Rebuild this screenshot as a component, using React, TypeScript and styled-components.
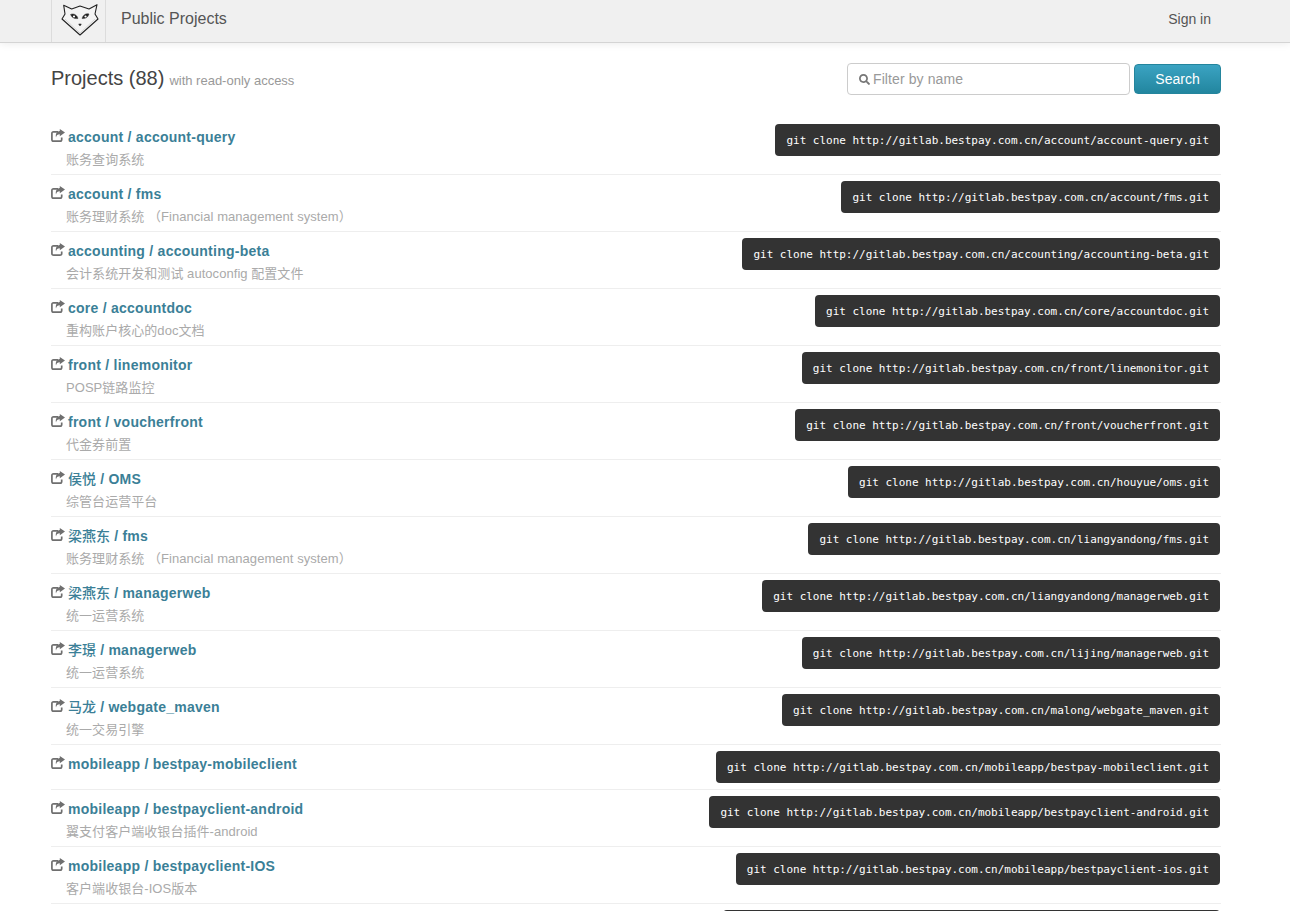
import React from 'react';
import styled, { createGlobalStyle } from 'styled-components';
import { FaSearch } from 'react-icons/fa';

const GlobalStyle = createGlobalStyle`
  html, body {
    margin: 0;
    padding: 0;
    height: 911px;
    overflow: hidden;
    background: #fff;
    font-family: "Liberation Sans", "Noto Sans CJK SC", Arial, sans-serif;
    font-size: 13px;
    color: #555;
  }
`;

const NavBar = styled.header`
  height: 42px;
  background: #f0f0f0;
  border-bottom: 1px solid #d4d4d4;
  box-shadow: 0 1px 8px rgba(0, 0, 0, 0.08);
  padding-left: 51px;
`;

const NavInner = styled.div`
  width: 1170px;
  height: 100%;
  display: flex;
  align-items: center;
`;

const Brand = styled.a`
  width: 53px;
  height: 100%;
  display: flex;
  align-items: center;
  justify-content: center;
  border-left: 1px solid #dcdcdc;
  border-right: 1px solid #dcdcdc;

  svg {
    margin: -2px 0 0 2px;
  }
`;

const NavTitle = styled.span`
  margin-left: 15px;
  padding-bottom: 4px;
  font-size: 16px;
  color: #555;
  flex: 1;
`;

const SignIn = styled.a`
  padding-bottom: 4px;
  font-size: 14px;
  color: #555;
  margin-right: 10px;
`;

const Main = styled.main`
  width: 1170px;
  margin-left: 51px;
`;

const TopRow = styled.div`
  box-sizing: border-box;
  height: 75px;
  display: flex;
  align-items: center;
  padding-bottom: 3px;
`;

const Heading = styled.h3`
  margin: 0;
  flex: 1;
  font-size: 20px;
  font-weight: 400;
  line-height: 24px;
  color: #444;
`;

const HeadingNote = styled.small`
  font-size: 13px;
  color: #999;
  margin-left: 5px;
`;

const FilterBox = styled.label`
  box-sizing: border-box;
  width: 283px;
  height: 32px;
  display: flex;
  align-items: center;
  gap: 3px;
  padding-left: 11px;
  background: #fff;
  border: 1px solid #ccc;
  border-radius: 4px;
  color: #777;
  font-size: 11px;
`;

const FilterInput = styled.input`
  flex: 1;
  min-width: 0;
  border: 0;
  outline: 0;
  padding: 0;
  background: transparent;
  font-family: inherit;
  font-size: 14px;
  letter-spacing: 0.1px;
  color: #555;

  &::placeholder {
    color: #999;
    opacity: 1;
  }
`;

const SearchButton = styled.button`
  box-sizing: border-box;
  width: 87px;
  height: 30px;
  margin-left: 4px;
  background: linear-gradient(to bottom, #3ba3c2, #22869f);
  border: 1px solid #24859d;
  border-radius: 4px;
  color: #fff;
  font-family: inherit;
  font-size: 14px;
  padding: 0;
`;

const ProjectList = styled.ul`
  list-style: none;
  margin: 0;
  padding: 0;
`;

const ProjectRow = styled.li`
  display: flex;
  justify-content: space-between;
  align-items: flex-start;
  padding: 6px 0;
  border-bottom: 1px solid #eee;
`;

const ProjectInfo = styled.div`
  min-width: 0;
`;

const ProjectTitle = styled.div`
  display: flex;
  align-items: center;
  height: 26px;
  font-size: 14px;
  font-weight: 700;
  letter-spacing: 0.25px;
  color: #3b7f97;
`;

const ProjectName = styled.span`
  line-height: 20px;
  white-space: pre;
`;

const OwnerName = styled.span<{ $cjk?: boolean }>`
  font-weight: ${(p) => (p.$cjk ? 500 : 700)};
  letter-spacing: ${(p) => (p.$cjk ? '0' : '0.25px')};
  line-height: 0;
`;

const ShareGlyph = styled.svg`
  width: 14px;
  height: 13px;
  margin-right: 3px;
  margin-top: -4px;
  color: #6f6f6f;
`;

const ProjectDesc = styled.div`
  padding-left: 15px;
  height: 18px;
  line-height: 19px;
  font-size: 13px;
  letter-spacing: 0.05px;
  color: #aaa;
`;

const CloneBar = styled.code`
  box-sizing: border-box;
  height: 32px;
  margin-right: 1px;
  padding: 0 11px;
  display: flex;
  align-items: center;
  background: #333;
  border-radius: 4px;
  color: #fff;
  font-family: "DejaVu Sans Mono", monospace;
  font-size: 11px;
  letter-spacing: -0.02px;
  white-space: pre;
`;

const ShareIcon = () => (
  <ShareGlyph viewBox="0 0 14 13">
    <path
      d="M7 2.8 H2.6 Q0.9 2.8 0.9 4.5 V10.4 Q0.9 12.1 2.6 12.1 H9 Q10.7 12.1 10.7 10.4 V8.5"
      fill="none"
      stroke="currentColor"
      strokeWidth="1.7"
    />
    <path d="M8.8 0 L14 3.6 L8.8 7.2 V5.2 C6.5 5.2 5.5 6.2 5 8.4 C4.2 5 5.8 2.3 8.8 2 Z" fill="currentColor" />
  </ShareGlyph>
);

const CatLogo = () => (
  <svg width="38" height="36" viewBox="0 0 38 36" fill="none" stroke="#222" strokeLinejoin="round">
    <path
      d="M2.7 3.3 L10.7 7 L19 4 L28 7 L36 2.7 L34 12 L37 17 L19 33 L1 17 L4 12 Z"
      strokeWidth="1.1"
      fill="#f4f4f4"
    />
    <path d="M4 17 L19 31 L34 17" strokeWidth="0.4" stroke="#aaa" />
    <path d="M9.5 12.5 C12 11 16 12.5 17 16.5 C14 17 11 16 9.5 12.5 Z" fill="#222" strokeWidth="0.4" />
    <path d="M28 12 C25.5 11 22 12.5 21 16.5 C24 17 27 15.5 28 12 Z" fill="#222" strokeWidth="0.4" />
    <circle cx="13" cy="14.5" r="1.1" fill="#fff" stroke="none" />
    <circle cx="24.5" cy="14.5" r="1.1" fill="#fff" stroke="none" />
    <path d="M17.7 22 H20.3 L19 24 Z" fill="#222" strokeWidth="0.5" />
  </svg>
);

type Project = { owner: string; cjk?: boolean; name: string; desc?: string; path: string };

const projects: Project[] = [
  { owner: 'account', name: 'account-query', desc: '账务查询系统', path: 'account/account-query' },
  { owner: 'account', name: 'fms', desc: '账务理财系统 （Financial management system）', path: 'account/fms' },
  { owner: 'accounting', name: 'accounting-beta', desc: '会计系统开发和测试 autoconfig 配置文件', path: 'accounting/accounting-beta' },
  { owner: 'core', name: 'accountdoc', desc: '重构账户核心的doc文档', path: 'core/accountdoc' },
  { owner: 'front', name: 'linemonitor', desc: 'POSP链路监控', path: 'front/linemonitor' },
  { owner: 'front', name: 'voucherfront', desc: '代金券前置', path: 'front/voucherfront' },
  { owner: '侯悦', cjk: true, name: 'OMS', desc: '综管台运营平台', path: 'houyue/oms' },
  { owner: '梁燕东', cjk: true, name: 'fms', desc: '账务理财系统 （Financial management system）', path: 'liangyandong/fms' },
  { owner: '梁燕东', cjk: true, name: 'managerweb', desc: '统一运营系统', path: 'liangyandong/managerweb' },
  { owner: '李璟', cjk: true, name: 'managerweb', desc: '统一运营系统', path: 'lijing/managerweb' },
  { owner: '马龙', cjk: true, name: 'webgate_maven', desc: '统一交易引擎', path: 'malong/webgate_maven' },
  { owner: 'mobileapp', name: 'bestpay-mobileclient', path: 'mobileapp/bestpay-mobileclient' },
  { owner: 'mobileapp', name: 'bestpayclient-android', desc: '翼支付客户端收银台插件-android', path: 'mobileapp/bestpayclient-android' },
  { owner: 'mobileapp', name: 'bestpayclient-IOS', desc: '客户端收银台-IOS版本', path: 'mobileapp/bestpayclient-ios' },
  { owner: 'mobileapp', name: 'bestpayclient-wxpay', path: 'mobileapp/bestpayclient-wxpay' },
];

const App = () => (
  <>
    <GlobalStyle />
    <NavBar>
      <NavInner>
        <Brand>
          <CatLogo />
        </Brand>
        <NavTitle>Public Projects</NavTitle>
        <SignIn>Sign in</SignIn>
      </NavInner>
    </NavBar>
    <Main>
      <TopRow>
        <Heading>
          Projects (88)
          <HeadingNote>with read-only access</HeadingNote>
        </Heading>
        <FilterBox>
          <FaSearch />
          <FilterInput placeholder="Filter by name" />
        </FilterBox>
        <SearchButton>Search</SearchButton>
      </TopRow>
      <ProjectList>
        {projects.map((p) => (
          <ProjectRow key={p.path}>
            <ProjectInfo>
              <ProjectTitle>
                <ShareIcon />
                <ProjectName>
                  <OwnerName $cjk={p.cjk}>{p.owner}</OwnerName>
                  {` / ${p.name}`}
                </ProjectName>
              </ProjectTitle>
              {p.desc && <ProjectDesc>{p.desc}</ProjectDesc>}
            </ProjectInfo>
            <CloneBar>{`git clone http://gitlab.bestpay.com.cn/${p.path}.git`}</CloneBar>
          </ProjectRow>
        ))}
      </ProjectList>
    </Main>
  </>
);

export default App;
